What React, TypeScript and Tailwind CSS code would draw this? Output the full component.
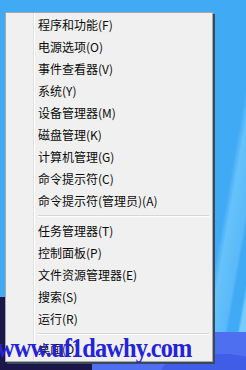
import React from 'react';

type Entry = { label: string } | { sep: true };

const ITEMS: Entry[] = [
  { label: '程序和功能(F)' },
  { label: '电源选项(O)' },
  { label: '事件查看器(V)' },
  { label: '系统(Y)' },
  { label: '设备管理器(M)' },
  { label: '磁盘管理(K)' },
  { label: '计算机管理(G)' },
  { label: '命令提示符(C)' },
  { label: '命令提示符(管理员)(A)' },
  { sep: true },
  { label: '任务管理器(T)' },
  { label: '控制面板(P)' },
  { label: '文件资源管理器(E)' },
  { label: '搜索(S)' },
  { label: '运行(R)' },
  { sep: true },
  { label: '桌面(D)' },
];

const ContextMenu: React.FC = () => (
  <div className="flex w-[208px] bg-[#f0f0f0] border border-[#a7a7a7] shadow-[2px_2px_0_0_#3a4a5c]">
    <div className="w-[28px] shrink-0 border-r border-[#e1e1e1]" />
    <div className="flex-1 flex flex-col py-[1px] pr-[3px] pl-[3px] border-l border-white">
      {ITEMS.map((it, i) =>
        'sep' in it ? (
          <div key={i} className="h-[8px] flex flex-col justify-center">
            <div className="h-[1px] bg-[#d7d7d7]" />
            <div className="h-[1px] bg-white" />
          </div>
        ) : (
          <div key={i} className="h-[22px] flex items-center text-[12px] leading-none text-[#0a0a0a]">
            {it.label}
          </div>
        )
      )}
    </div>
  </div>
);

export default function App() {
  return (
    <div
      className="relative w-[246px] h-[370px] overflow-hidden pt-[12px] pl-[5px] [background:linear-gradient(#1b1549,#1b1549)_0_297px/92px_73px_no-repeat,radial-gradient(ellipse_at_80%_100%,#3f5de6_0,#3f5de6_30%,transparent_31%)_92px_332px/154px_38px_no-repeat,linear-gradient(#4d6ff0,#4d6ff0)_92px_332px/154px_38px_no-repeat,linear-gradient(100deg,#40aaf5_0,#40aaf5_84%,#66c2fa_86%,#5ab9f8_91%,#40aaf5_92%,#40aaf5_95%,#78ccfc_96%)]"
      style={{ fontFamily: '"Noto Sans CJK SC", "Noto Sans", sans-serif' }}
    >
      <ContextMenu />
      <div
        className="absolute left-[-3px] top-[334px] text-[28px] leading-none font-bold text-[#2424d6] tracking-[-1px] origin-left scale-x-[0.87] whitespace-nowrap"
        style={{ fontFamily: '"Liberation Serif", serif' }}
      >
        www.uf1dawhy.com
      </div>
    </div>
  );
}
